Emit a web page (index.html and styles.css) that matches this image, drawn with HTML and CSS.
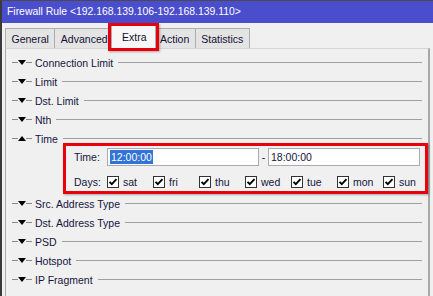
FILE: index.html
```html
<!DOCTYPE html>
<html lang="en">
<head>
    <meta charset="UTF-8">
    <title>Firewall Rule</title>
    <link rel="stylesheet" href="styles.css">
</head>
<body>
    <div class="window">
        <div class="titlebar">Firewall Rule &lt;192.168.139.106-192.168.139.110&gt;</div>

        <div class="tabs">
            <div class="tab">General</div>
            <div class="tab">Advanced</div>
            <div class="tab active">Extra</div>
            <div class="tab">Action</div>
            <div class="tab">Statistics</div>
        </div>

        <div class="panel">
            <div class="section"><span class="dash"></span><span class="arrow down"></span><span class="dash"></span><span class="label">Connection Limit</span><span class="rule"></span></div>
            <div class="section"><span class="dash"></span><span class="arrow down"></span><span class="dash"></span><span class="label">Limit</span><span class="rule"></span></div>
            <div class="section"><span class="dash"></span><span class="arrow down"></span><span class="dash"></span><span class="label">Dst. Limit</span><span class="rule"></span></div>
            <div class="section"><span class="dash"></span><span class="arrow down"></span><span class="dash"></span><span class="label">Nth</span><span class="rule"></span></div>
            <div class="section"><span class="dash"></span><span class="arrow up"></span><span class="dash"></span><span class="label">Time</span><span class="rule"></span></div>

            <div class="time-box">
                <div class="field-row">
                    <span class="field-label">Time:</span>
                    <div class="input"><span class="selected">12:00:00</span></div>
                    <span class="range-sep">-</span>
                    <div class="input">18:00:00</div>
                </div>
                <div class="days-row">
                    <span class="field-label">Days:</span>
                    <label class="day"><span class="check"><svg width="12" height="12" viewBox="0 0 12 12"><polyline points="2.5,5.8 4.8,8.2 9.5,3.2" fill="none" stroke="#000" stroke-width="1.9"/></svg></span>sat</label>
                    <label class="day"><span class="check"><svg width="12" height="12" viewBox="0 0 12 12"><polyline points="2.5,5.8 4.8,8.2 9.5,3.2" fill="none" stroke="#000" stroke-width="1.9"/></svg></span>fri</label>
                    <label class="day"><span class="check"><svg width="12" height="12" viewBox="0 0 12 12"><polyline points="2.5,5.8 4.8,8.2 9.5,3.2" fill="none" stroke="#000" stroke-width="1.9"/></svg></span>thu</label>
                    <label class="day"><span class="check"><svg width="12" height="12" viewBox="0 0 12 12"><polyline points="2.5,5.8 4.8,8.2 9.5,3.2" fill="none" stroke="#000" stroke-width="1.9"/></svg></span>wed</label>
                    <label class="day"><span class="check"><svg width="12" height="12" viewBox="0 0 12 12"><polyline points="2.5,5.8 4.8,8.2 9.5,3.2" fill="none" stroke="#000" stroke-width="1.9"/></svg></span>tue</label>
                    <label class="day"><span class="check"><svg width="12" height="12" viewBox="0 0 12 12"><polyline points="2.5,5.8 4.8,8.2 9.5,3.2" fill="none" stroke="#000" stroke-width="1.9"/></svg></span>mon</label>
                    <label class="day"><span class="check"><svg width="12" height="12" viewBox="0 0 12 12"><polyline points="2.5,5.8 4.8,8.2 9.5,3.2" fill="none" stroke="#000" stroke-width="1.9"/></svg></span>sun</label>
                </div>
            </div>

            <div class="section"><span class="dash"></span><span class="arrow down"></span><span class="dash"></span><span class="label">Src. Address Type</span><span class="rule"></span></div>
            <div class="section"><span class="dash"></span><span class="arrow down"></span><span class="dash"></span><span class="label">Dst. Address Type</span><span class="rule"></span></div>
            <div class="section"><span class="dash"></span><span class="arrow down"></span><span class="dash"></span><span class="label">PSD</span><span class="rule"></span></div>
            <div class="section"><span class="dash"></span><span class="arrow down"></span><span class="dash"></span><span class="label">Hotspot</span><span class="rule"></span></div>
            <div class="section"><span class="dash"></span><span class="arrow down"></span><span class="dash"></span><span class="label">IP Fragment</span><span class="rule"></span></div>
        </div>
    </div>
</body>
</html>
```

FILE: styles.css
```css
body, html {
    margin: 0;
    padding: 0;
    font-family: "Liberation Sans", Arial, sans-serif;
    font-size: 10.5px;
    background-color: #f0f0f0;
    overflow: hidden;
}

.window {
    height: 296px;
    border-top: 1px solid #4a4a4a;
    border-left: 2px solid #3a3a3a;
    box-sizing: border-box;
}

.titlebar {
    height: 22px;
    line-height: 22px;
    background-color: #4b4ecc;
    color: white;
    padding-left: 5px;
    font-size: 10.4px;
    white-space: nowrap;
}

.tabs {
    display: flex;
    align-items: flex-end;
    height: 25px;
    padding-left: 3px;
}

.tab {
    height: 20px;
    line-height: 20px;
    padding: 0 5.5px;
    box-sizing: border-box;
    background-color: #e4e4e4;
    border: 1px solid #adadad;
    border-bottom: none;
    margin-right: -1px;
    color: #111133;
}

.tab.active {
    position: relative;
    z-index: 2;
    height: 24px;
    line-height: 22px;
    padding: 0 8px 0 10px;
    margin: 0 -2px -1px -2px;
    background-color: #f7f7f7;
}

.tab.active::after {
    content: "";
    position: absolute;
    left: -4px;
    top: -3px;
    right: -4px;
    bottom: -2px;
    border: 3px solid #e8000b;
    box-shadow: 1px 1px 2px rgba(0, 0, 0, 0.3);
}

.panel {
    height: 248px;
    box-sizing: border-box;
    margin-left: 3px;
    width: 425px;
    border-top: 1px solid #d6d6d6;
    border-left: 1px solid #a8a8a8;
    border-right: 2px solid #a8a8a8;
    padding-top: 4px;
}

.section {
    display: flex;
    align-items: center;
    height: 19px;
    padding: 0 6px 0 6px;
    color: #15153d;
}

.dash {
    width: 6px;
    height: 1px;
    background-color: #8a8a8a;
}

.arrow {
    width: 0;
    height: 0;
    border-left: 4.5px solid transparent;
    border-right: 4.5px solid transparent;
}

.arrow.down {
    border-top: 5px solid #000;
}

.arrow.up {
    border-bottom: 5px solid #000;
}

.label {
    margin-left: 3px;
    margin-right: 5px;
    white-space: nowrap;
}

.rule {
    flex: 1;
    height: 1px;
    background-color: #a0a0a0;
}

.time-box {
    margin: -5px 0 0 57px;
    height: 51px;
    box-sizing: border-box;
    border: 3px solid #e8000b;
    box-shadow: 1px 1px 2px rgba(0, 0, 0, 0.3);
    padding: 2px 5px 1px 8px;
    display: flex;
    flex-direction: column;
    gap: 8px;
    color: #15153d;
}

.field-row {
    display: flex;
    height: 18px;
    align-items: center;
}

.field-label {
    width: 33px;
    flex-shrink: 0;
}

.input {
    flex: 1;
    height: 18px;
    box-sizing: border-box;
    background-color: white;
    border: 1px solid #a9abb2;
    padding: 1px 2px;
    line-height: 14px;
}

.selected {
    background-color: #3173d6;
    color: white;
    display: inline-block;
    padding: 0 1px;
}

.range-sep {
    width: 9px;
    text-align: center;
}

.days-row {
    display: flex;
    height: 16px;
    align-items: center;
}

.day {
    width: 46px;
    flex-shrink: 0;
    display: flex;
    align-items: center;
    gap: 4px;
}

.check {
    width: 12px;
    height: 12px;
    box-sizing: border-box;
    border: 1px solid #333;
    background-color: white;
    display: flex;
}

.check svg {
    margin: -1px;
}
```
